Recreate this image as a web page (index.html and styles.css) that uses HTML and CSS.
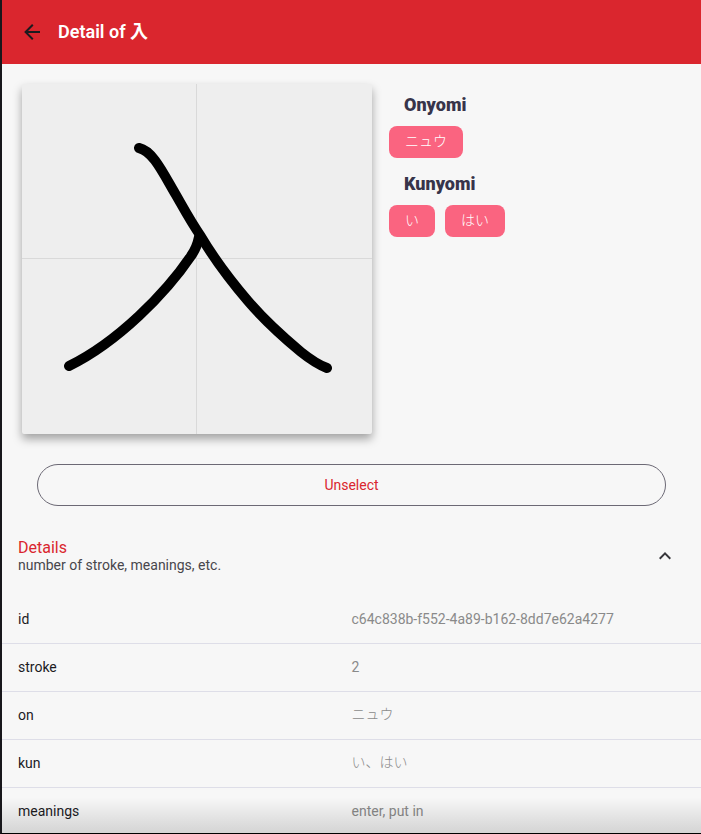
FILE: index.html
```html
<!DOCTYPE html>
<html lang="en">
<head>
<meta charset="utf-8">
<meta name="viewport" content="width=device-width, initial-scale=1">
<title>Detail of 入</title>
<link rel="stylesheet" href="styles.css">
</head>
<body>
<div class="screen">
  <header class="appbar">
    <button class="back" type="button" aria-label="Back">
      <svg viewBox="0 0 24 24" width="24" height="24" aria-hidden="true"><path fill="currentColor" d="M20 11v2H8l5.500 5.500-1.420 1.420L4.160 12l7.920-7.920L13.500 5.500 8 11h12z"/></svg>
    </button>
    <h1 class="title">Detail of <span lang="ja">入</span></h1>
  </header>
  <main>
    <section class="summary">
      <div class="kanji">
        <svg viewBox="0 0 350 350" role="img" aria-label="入">
          <path class="guide" d="M174.500 0V350M0 174.500H350"/>
          <path class="stroke" d="M117 64C131 67 141 89 154 111C162 125 169 138 178 151C191 173 208 196 226 217C243 237 261 253 279 268C289 276 297 281 305 284"/>
          <path class="stroke" d="M177 153C176 158 174 165 169 172C144 209 96 258 47 282"/>
        </svg>
      </div>
      <div class="readings">
        <h2 class="reading-title">Onyomi</h2>
        <ul class="chips" lang="ja"><li class="chip">ニュウ</li></ul>
        <h2 class="reading-title">Kunyomi</h2>
        <ul class="chips" lang="ja"><li class="chip">い</li><li class="chip">はい</li></ul>
      </div>
    </section>
    <button class="unselect" type="button">Unselect</button>
    <section>
      <button class="accordion" type="button" aria-expanded="true" aria-controls="details">
        <span class="accordion-text">
          <span class="accordion-title">Details</span>
          <span class="accordion-sub">number of stroke, meanings, etc.</span>
        </span>
        <svg viewBox="0 0 24 24" width="24" height="24" aria-hidden="true"><path fill="currentColor" d="M7.410 15.410 12 10.830l4.590 4.580L18 14l-6-6-6 6z"/></svg>
      </button>
      <table class="details" id="details">
        <tbody>
          <tr><th scope="row">id</th><td>c64c838b-f552-4a89-b162-8dd7e62a4277</td></tr>
          <tr><th scope="row">stroke</th><td>2</td></tr>
          <tr><th scope="row">on</th><td lang="ja">ニュウ</td></tr>
          <tr><th scope="row">kun</th><td lang="ja">い、はい</td></tr>
          <tr><th scope="row">meanings</th><td>enter, put in</td></tr>
        </tbody>
      </table>
    </section>
  </main>
  <div class="fade"></div>
</div>
</body>
</html>
```
FILE: styles.css
```css
* { box-sizing: border-box; }

body {
  margin: 0;
  background: #f7f7f7;
  color: #1c1b1f;
  font: 14px/20px Roboto, "Noto Sans CJK JP", sans-serif;
}

button {
  font: inherit;
  cursor: pointer;
}

.screen {
  position: relative;
  height: 100vh;
  overflow: hidden;
  border-left: 2px solid #18171b;
  border-bottom: 1px solid #000;
}

.appbar {
  display: flex;
  align-items: center;
  gap: 14px;
  height: 64px;
  padding: 0 18px;
  background: #da262e;
}

.back {
  display: flex;
  padding: 0;
  border: 0;
  background: none;
  color: #1c1b1f;
}

.title {
  margin: 0;
  color: #fff;
  font-size: 18px;
  line-height: 24px;
  font-weight: 600;
}

.summary {
  display: flex;
  gap: 17px;
  padding: 20px 20px 30px;
}

.kanji {
  flex: 0 1 350px;
  border-radius: 2px;
  background: #eee;
  box-shadow: 0 5px 10px rgba(0, 0, 0, 0.35);
}

.kanji svg {
  display: block;
  width: 100%;
}

.guide {
  fill: none;
  stroke: #d9d9d9;
  stroke-width: 1;
}

.stroke {
  fill: none;
  stroke: #000;
  stroke-width: 10;
  stroke-linecap: round;
  stroke-linejoin: round;
}

.readings {
  flex: 1;
  padding-top: 8px;
}

.reading-title {
  margin: 0 0 8px 15px;
  color: #37344a;
  font-size: 18px;
  line-height: 26px;
  font-weight: 900;
}

.chips {
  display: flex;
  flex-wrap: wrap;
  gap: 10px;
  margin: 0 0 13px;
  padding: 0;
  list-style: none;
}

.chip {
  padding: 5px 16px 7px;
  border-radius: 8px;
  background: #fa6480;
  color: #fff;
  font-weight: 300;
}

.unselect {
  display: block;
  width: calc(100% - 70px);
  height: 42px;
  margin: 0 35px;
  border: 1px solid #6c6975;
  border-radius: 21px;
  background: none;
  color: #da262e;
  font-weight: 400;
}

.accordion {
  display: flex;
  align-items: center;
  justify-content: space-between;
  width: 100%;
  height: 89px;
  padding: 11px 24px 0 16px;
  border: 0;
  background: none;
  color: #37363b;
  text-align: left;
}

.accordion-text {
  display: flex;
  flex-direction: column;
}

.accordion-title {
  color: #da262e;
  font-size: 16px;
  line-height: 18px;
}

.accordion-sub {
  color: #48464c;
  line-height: 16px;
}

.details {
  width: 100%;
  border-collapse: collapse;
  table-layout: fixed;
}

.details th,
.details td {
  height: 48px;
  padding: 0 16px;
  border-bottom: 1px solid #dedee8;
  font-weight: 400;
  text-align: left;
}

.details td {
  padding-left: 0;
  color: #8a8a8a;
}

.details td:lang(ja) {
  padding-bottom: 2px;
  font-weight: 300;
}

.fade {
  position: absolute;
  right: 0;
  bottom: 0;
  left: 0;
  height: 36px;
  background: linear-gradient(transparent, rgba(0, 0, 0, 0.14));
  pointer-events: none;
}
```
